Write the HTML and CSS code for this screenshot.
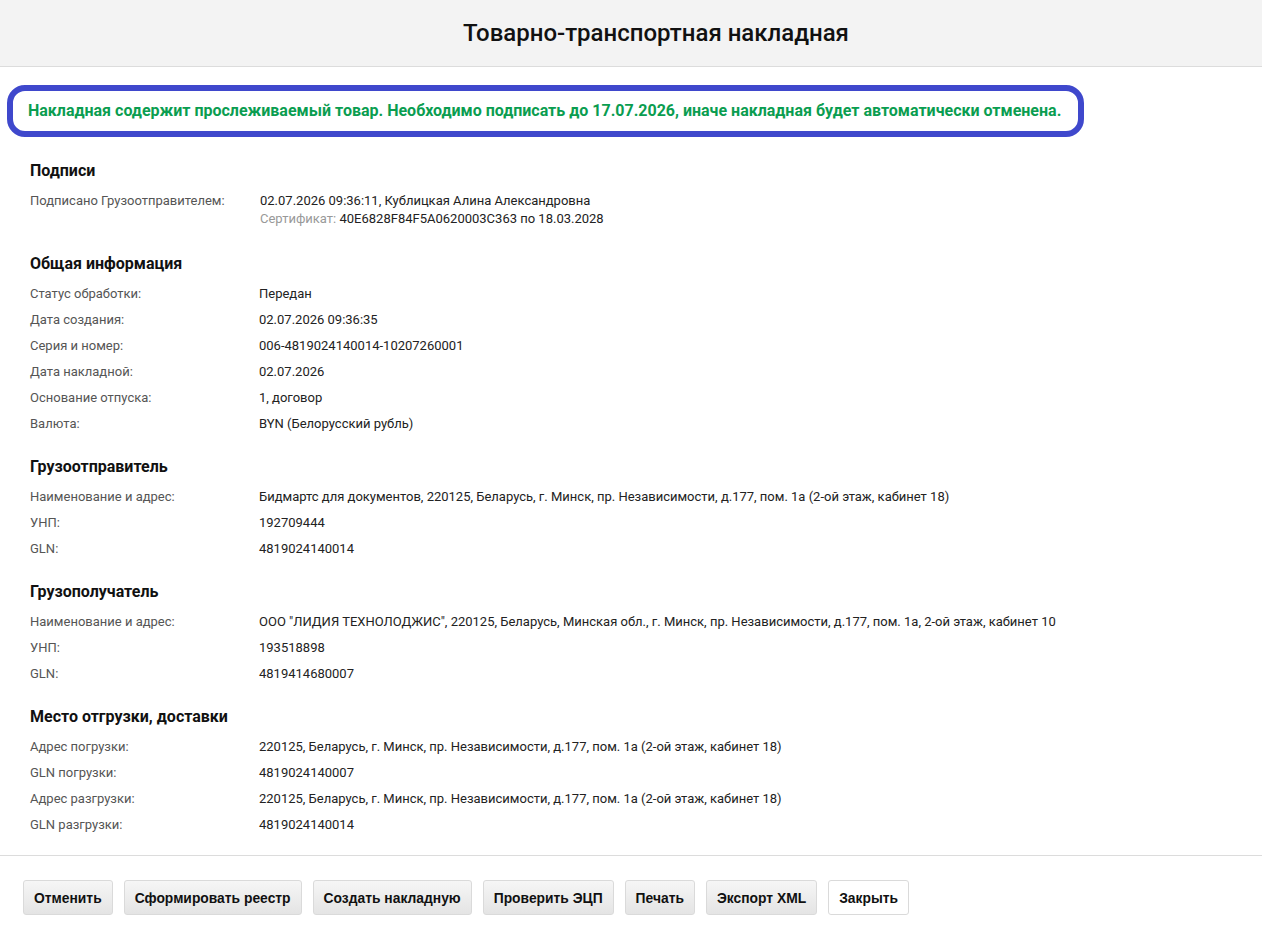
FILE: index.html
```html
<!DOCTYPE html>
<html>

<head>
    <title>Товарно-транспортная накладная</title>
    <link rel="stylesheet" href="styles.css">
</head>

<body>
    <!-- Page header -->
    <div class="page-header">
        <h1>Товарно-транспортная накладная</h1>
    </div>

    <!-- Warning about traceable goods -->
    <div class="notice">
        Накладная содержит прослеживаемый товар. Необходимо подписать до 17.07.2026, иначе накладная будет автоматически отменена.
    </div>

    <div class="content">
        <div class="section section-signs">
            <h2>Подписи</h2>
            <div class="row">
                <div class="label">Подписано Грузоотправителем:</div>
                <div class="value value-sign">
                    02.07.2026 09:36:11, Кублицкая Алина Александровна<br>
                    <span class="muted">Сертификат:</span> 40E6828F84F5A0620003C363 по 18.03.2028
                </div>
            </div>
        </div>

        <div class="section">
            <h2>Общая информация</h2>
            <div class="row"><div class="label">Статус обработки:</div><div class="value">Передан</div></div>
            <div class="row"><div class="label">Дата создания:</div><div class="value">02.07.2026 09:36:35</div></div>
            <div class="row"><div class="label">Серия и номер:</div><div class="value">006-4819024140014-10207260001</div></div>
            <div class="row"><div class="label">Дата накладной:</div><div class="value">02.07.2026</div></div>
            <div class="row"><div class="label">Основание отпуска:</div><div class="value">1, договор</div></div>
            <div class="row"><div class="label">Валюта:</div><div class="value">BYN (Белорусский рубль)</div></div>
        </div>

        <div class="section">
            <h2>Грузоотправитель</h2>
            <div class="row"><div class="label">Наименование и адрес:</div><div class="value">Бидмартс для документов, 220125, Беларусь, г. Минск, пр. Независимости, д.177, пом. 1а (2-ой этаж, кабинет 18)</div></div>
            <div class="row"><div class="label">УНП:</div><div class="value">192709444</div></div>
            <div class="row"><div class="label">GLN:</div><div class="value">4819024140014</div></div>
        </div>

        <div class="section">
            <h2>Грузополучатель</h2>
            <div class="row"><div class="label">Наименование и адрес:</div><div class="value">ООО "ЛИДИЯ ТЕХНОЛОДЖИС", 220125, Беларусь, Минская обл., г. Минск, пр. Независимости, д.177, пом. 1а, 2-ой этаж, кабинет 10</div></div>
            <div class="row"><div class="label">УНП:</div><div class="value">193518898</div></div>
            <div class="row"><div class="label">GLN:</div><div class="value">4819414680007</div></div>
        </div>

        <div class="section">
            <h2>Место отгрузки, доставки</h2>
            <div class="row"><div class="label">Адрес погрузки:</div><div class="value">220125, Беларусь, г. Минск, пр. Независимости, д.177, пом. 1а (2-ой этаж, кабинет 18)</div></div>
            <div class="row"><div class="label">GLN погрузки:</div><div class="value">4819024140007</div></div>
            <div class="row"><div class="label">Адрес разгрузки:</div><div class="value">220125, Беларусь, г. Минск, пр. Независимости, д.177, пом. 1а (2-ой этаж, кабинет 18)</div></div>
            <div class="row"><div class="label">GLN разгрузки:</div><div class="value">4819024140014</div></div>
        </div>
    </div>

    <!-- Action buttons -->
    <div class="actions">
        <button type="button">Отменить</button>
        <button type="button">Сформировать реестр</button>
        <button type="button">Создать накладную</button>
        <button type="button">Проверить ЭЦП</button>
        <button type="button">Печать</button>
        <button type="button">Экспорт XML</button>
        <button type="button" class="btn-light">Закрыть</button>
    </div>
</body>

</html>
```

FILE: styles.css
```css
/* Basic styling for the body */
body {
    margin: 0;
    font-family: Roboto, "Liberation Sans", Arial, sans-serif;
    color: #222;
    background-color: #fff;
}

/* Header bar */
.page-header {
    height: 66px;
    padding-left: 50px;
    background-color: #f3f3f3;
    border-bottom: 1px solid #dcdcdc;
    display: flex;
    align-items: center;
    justify-content: center;
}

.page-header h1 {
    margin: 0;
    font-size: 24px;
    font-weight: 500;
    color: #111;
}

/* Notice box */
.notice {
    width: 1050px;
    height: 40px;
    margin: 18px 0 0 7px;
    padding: 0 0 0 15px;
    line-height: 40px;
    border: 6px solid #3f48cc;
    border-radius: 18px;
    color: #0a9d50;
    font-size: 16px;
    font-weight: bold;
}

/* Details */
.content {
    padding: 24px 30px 0;
}

.section {
    margin-bottom: 20px;
}

.section-signs {
    margin-bottom: 22px;
}

.section h2 {
    margin: 0 0 7px;
    font-size: 16px;
    line-height: 20px;
    font-weight: bold;
    color: #111;
}

.row {
    display: flex;
    font-size: 13px;
    line-height: 18px;
    padding: 4px 0;
}

.label {
    width: 229px;
    flex-shrink: 0;
    color: #555;
}

.value {
    color: #222;
}

.value-sign {
    padding-left: 1px;
}

.muted {
    color: #999;
}

/* Buttons */
.actions {
    border-top: 1px solid #dcdcdc;
    margin-top: -3px;
    padding: 24px 23px 0;
    display: flex;
    gap: 11px;
}

button {
    height: 35px;
    padding: 0 10px;
    font-family: "Liberation Sans", Arial, sans-serif;
    font-size: 13.85px;
    font-weight: bold;
    color: #111;
    background: linear-gradient(#f6f6f6, #e4e4e4);
    border: 1px solid #dadada;
    border-radius: 3px;
    cursor: pointer;
}

.btn-light {
    background: #fff;
}
```
